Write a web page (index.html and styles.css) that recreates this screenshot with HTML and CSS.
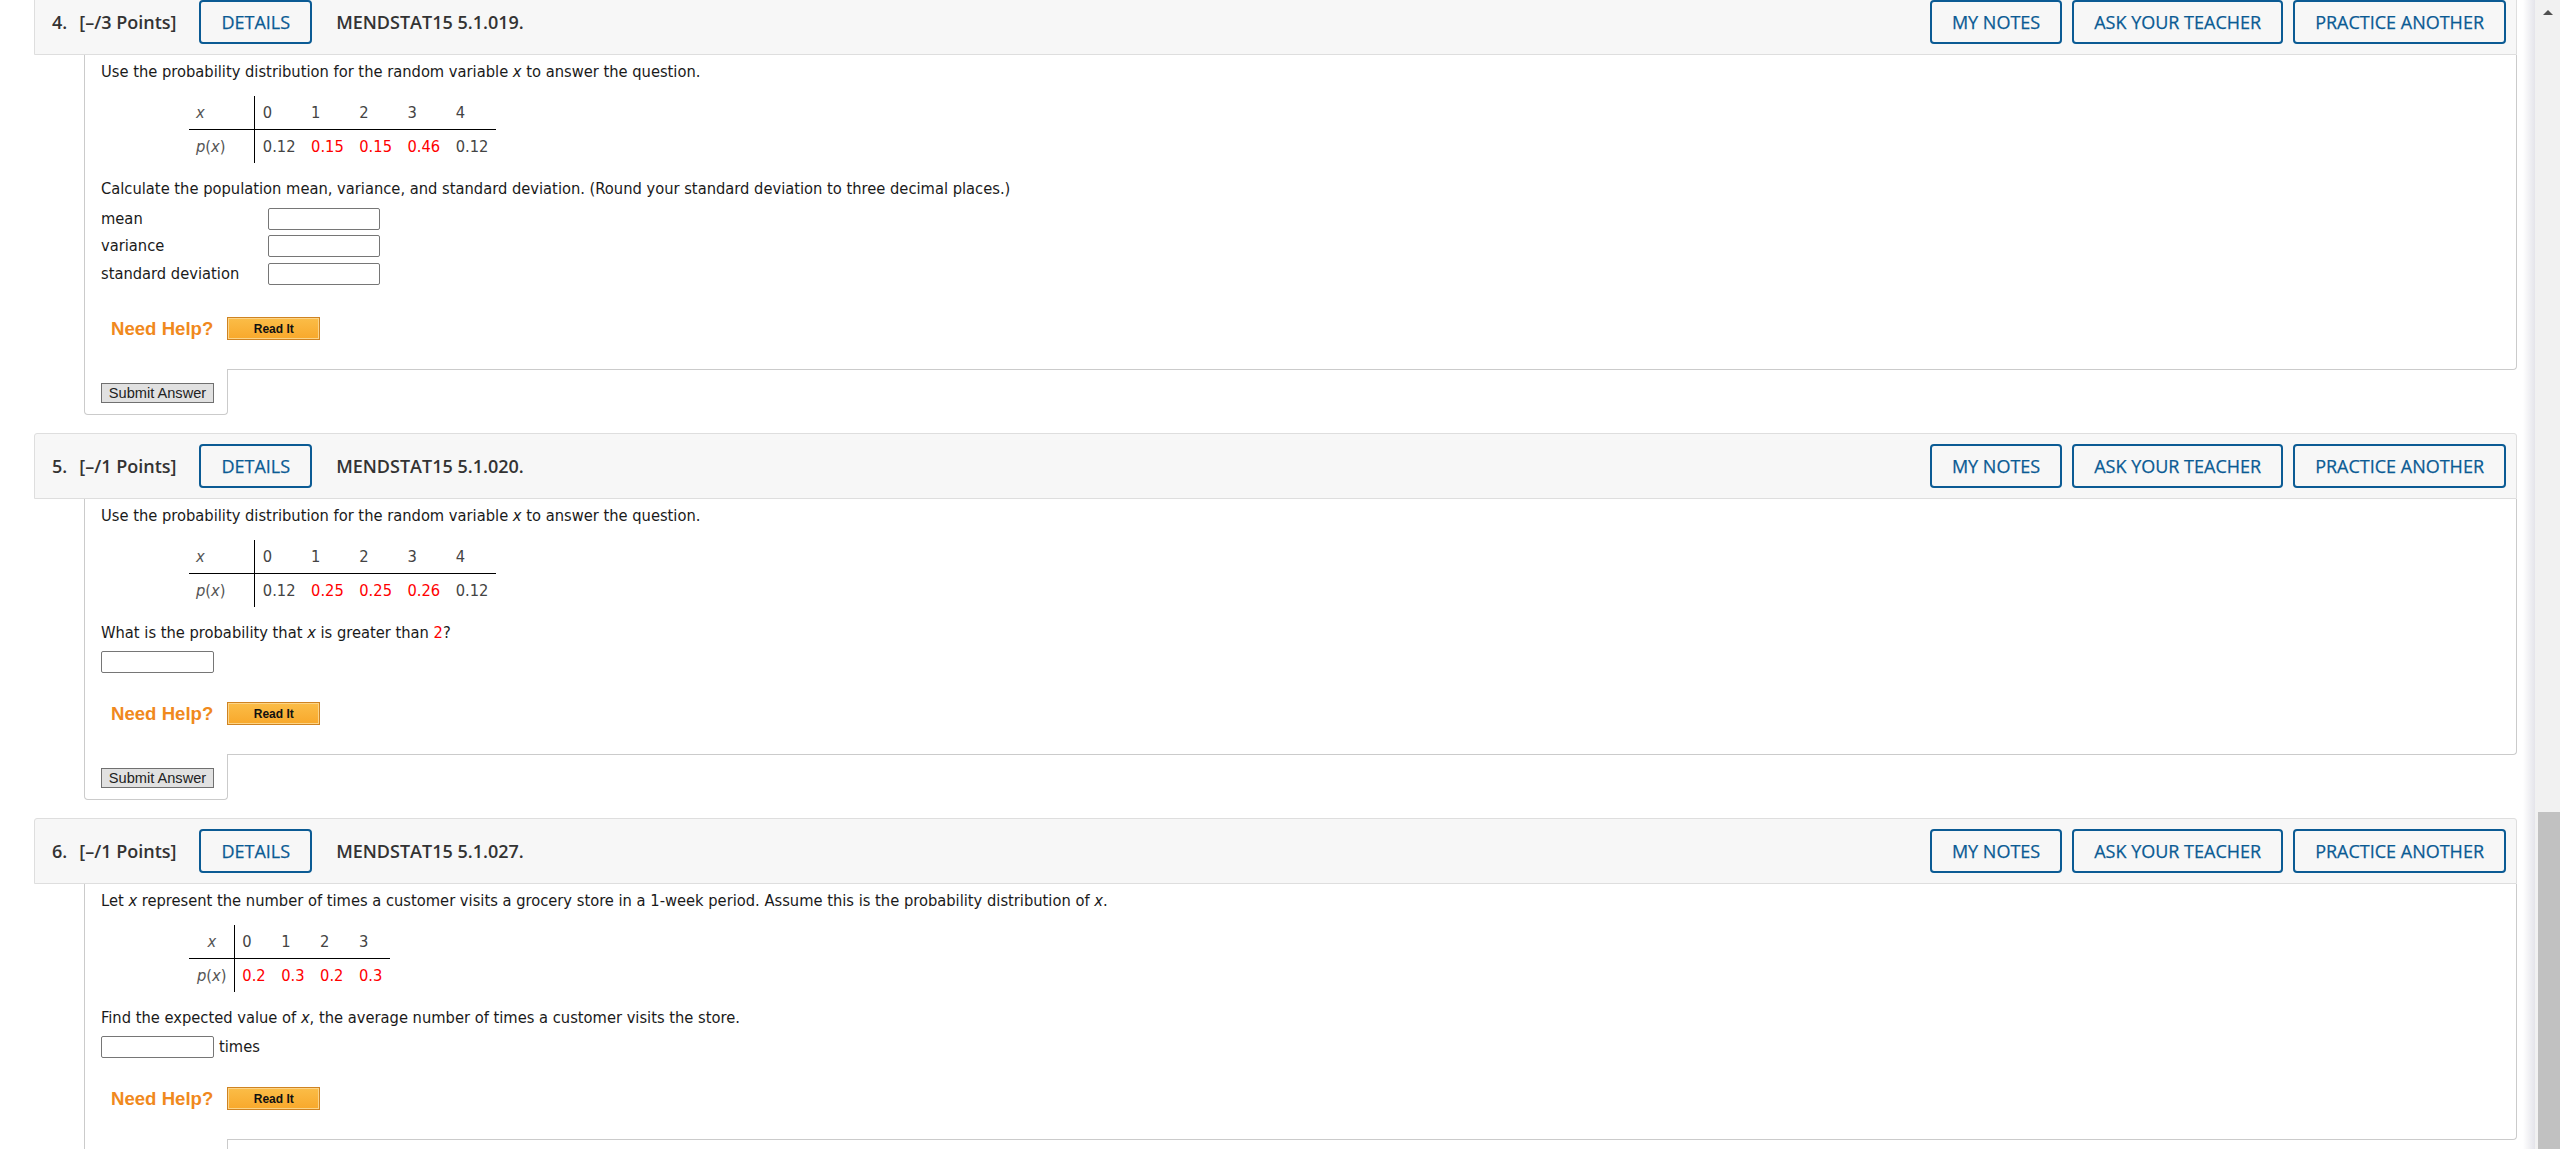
FILE: index.html
```html
<!DOCTYPE html>
<html lang="en">
<head>
<meta charset="utf-8">
<title>Assignment</title>
<link rel="stylesheet" href="styles.css">
</head>
<body>
<div class="window">
  <div class="main">

    <div class="q q-first">
      <div class="qhead">
        <span class="num">4.</span><span class="pts">[–/3 Points]</span>
        <span class="btn details">DETAILS</span>
        <span class="code">MENDSTAT15 5.1.019.</span>
        <div class="actions">
          <span class="btn">MY NOTES</span>
          <span class="btn">ASK YOUR TEACHER</span>
          <span class="btn">PRACTICE ANOTHER</span>
        </div>
      </div>
      <div class="qbody">
        <p>Use the probability distribution for the random variable <i>x</i> to answer the question.</p>
        <table class="dist">
          <tr><td class="lab"><i>x</i></td><td>0</td><td>1</td><td>2</td><td>3</td><td>4</td></tr>
          <tr><td class="lab"><i>p</i>(<i>x</i>)</td><td>0.12</td><td class="red">0.15</td><td class="red">0.15</td><td class="red">0.46</td><td>0.12</td></tr>
        </table>
        <p class="para">Calculate the population mean, variance, and standard deviation. (Round your standard deviation to three decimal places.)</p>
        <div class="inputs">
          <span>mean</span><input class="ans narrow" type="text">
          <span>variance</span><input class="ans narrow" type="text">
          <span>standard deviation</span><input class="ans narrow" type="text">
        </div>
        <div class="help help-after-grid">
          <span class="needhelp">Need Help?</span><span class="readit">Read It</span>
        </div>
      </div>
      <div class="tab"><button class="submit" type="button">Submit Answer</button></div>
    </div>

    <div class="q">
      <div class="qhead">
        <span class="num">5.</span><span class="pts">[–/1 Points]</span>
        <span class="btn details">DETAILS</span>
        <span class="code">MENDSTAT15 5.1.020.</span>
        <div class="actions">
          <span class="btn">MY NOTES</span>
          <span class="btn">ASK YOUR TEACHER</span>
          <span class="btn">PRACTICE ANOTHER</span>
        </div>
      </div>
      <div class="qbody">
        <p>Use the probability distribution for the random variable <i>x</i> to answer the question.</p>
        <table class="dist">
          <tr><td class="lab"><i>x</i></td><td>0</td><td>1</td><td>2</td><td>3</td><td>4</td></tr>
          <tr><td class="lab"><i>p</i>(<i>x</i>)</td><td>0.12</td><td class="red">0.25</td><td class="red">0.25</td><td class="red">0.26</td><td>0.12</td></tr>
        </table>
        <p class="para">What is the probability that <i>x</i> is greater than <span class="red">2</span>?</p>
        <div class="solo"><input class="ans" type="text"></div>
        <div class="help">
          <span class="needhelp">Need Help?</span><span class="readit">Read It</span>
        </div>
      </div>
      <div class="tab"><button class="submit" type="button">Submit Answer</button></div>
    </div>

    <div class="q">
      <div class="qhead">
        <span class="num">6.</span><span class="pts">[–/1 Points]</span>
        <span class="btn details">DETAILS</span>
        <span class="code">MENDSTAT15 5.1.027.</span>
        <div class="actions">
          <span class="btn">MY NOTES</span>
          <span class="btn">ASK YOUR TEACHER</span>
          <span class="btn">PRACTICE ANOTHER</span>
        </div>
      </div>
      <div class="qbody">
        <p>Let <i>x</i> represent the number of times a customer visits a grocery store in a 1-week period. Assume this is the probability distribution of <i>x</i>.</p>
        <table class="dist">
          <tr><td class="lab lab-c"><i>x</i></td><td>0</td><td>1</td><td>2</td><td>3</td></tr>
          <tr><td class="lab lab-c"><i>p</i>(<i>x</i>)</td><td class="red">0.2</td><td class="red">0.3</td><td class="red">0.2</td><td class="red">0.3</td></tr>
        </table>
        <p class="para">Find the expected value of <i>x</i>, the average number of times a customer visits the store.</p>
        <div class="solo inline"><input class="ans" type="text"><span>times</span></div>
        <div class="help">
          <span class="needhelp">Need Help?</span><span class="readit">Read It</span>
        </div>
      </div>
      <div class="tab"></div>
    </div>

  </div>
  <div class="shade"></div>
  <div class="sb">
    <div class="sb-arrow"><span class="tri"></span></div>
    <div class="sb-track"><div class="thumb"></div></div>
  </div>
</div>
</body>
</html>
```

FILE: styles.css
```css
html, body {
  margin: 0;
  padding: 0;
  background: #ffffff;
}
body {
  overflow: hidden;
}
.window {
  display: flex;
  height: 1149px;
  overflow: hidden;
}
.main {
  flex: 1;
  min-width: 0;
  padding: 0 6px 0 34px;
}
.shade {
  width: 12px;
  background: linear-gradient(to right, #ffffff, #e4e4ea);
}
.sb {
  width: 25px;
  background: #f1f1f1;
  display: flex;
  flex-direction: column;
}
.sb-arrow {
  height: 24px;
  display: flex;
  align-items: center;
  justify-content: center;
}
.tri {
  width: 0;
  height: 0;
  border-left: 5px solid transparent;
  border-right: 5px solid transparent;
  border-bottom: 5px solid #505050;
}
.sb-track {
  flex: 1;
  display: flex;
  flex-direction: column;
  justify-content: flex-end;
}
.thumb {
  height: 337px;
  margin-left: 3px;
  background: #c1c1c1;
}

/* question */
.q {
  margin-bottom: 18px;
}
.q-first {
  margin-top: -11px;
}
.qhead {
  box-sizing: border-box;
  height: 66px;
  display: flex;
  align-items: center;
  background: #f7f7f7;
  border: 1px solid #dedede;
  border-radius: 3px 3px 0 0;
  padding: 0 10px 0 17px;
  font-family: "Open Sans", "Noto Sans", sans-serif;
  font-size: 18px;
  color: #333333;
}
.num {
  font-weight: 600;
  margin-right: 12px;
}
.pts {
  font-weight: 600;
}
.code {
  font-weight: 600;
  margin-left: 24px;
}
.btn {
  box-sizing: border-box;
  height: 44px;
  padding: 0 20px;
  display: flex;
  align-items: center;
  border: 2px solid #0b5b94;
  border-radius: 4px;
  color: #0b5b94;
  font-weight: 500;
  -webkit-text-stroke: 0.25px #0b5b94;
  white-space: nowrap;
}
.details {
  margin-left: 23px;
}
.actions {
  margin-left: auto;
  display: flex;
  gap: 10px;
}

.qbody {
  margin-left: 50px;
  border: 1px solid #cbcbcb;
  border-top: 0;
  border-radius: 0 0 4px 0;
  padding: 7px 16px 29px;
  font-family: "DejaVu Sans", Verdana, sans-serif;
  font-stretch: semi-condensed;
  font-size: 16.35px;
  line-height: 20px;
  color: #1a1a1a;
}
.qbody p {
  margin: 0;
  white-space: nowrap;
}
.qbody .para {
  margin-top: 16px;
}
.red {
  color: #ff0000;
}

.dist {
  border-collapse: collapse;
  margin: 14px 0 0 88px;
}
.dist td {
  height: 33px;
  padding: 0 7.75px;
  color: #444444;
  white-space: nowrap;
  text-align: left;
}
.dist td.red {
  color: #ff0000;
}
.dist tr:first-child td {
  border-bottom: 1px solid #000000;
}
.dist td.lab {
  border-right: 1px solid #000000;
  color: #555555;
  padding: 0 28.5px 0 7px;
}
.dist td.lab-c {
  text-align: center;
  padding: 0 7px 0 8px;
}

.inputs {
  display: grid;
  grid-template-columns: 167px 112px;
  grid-auto-rows: 27.5px;
  align-items: center;
  margin-top: 6px;
}
.ans {
  box-sizing: border-box;
  display: block;
  width: 113px;
  height: 22px;
  margin: 0;
  padding: 0 3px;
  border: 1px solid #767676;
  border-radius: 2px;
  background: #ffffff;
}
.ans.narrow {
  width: 112px;
}
.solo {
  margin-top: 8px;
}
.inline {
  display: flex;
  align-items: center;
  gap: 5px;
}

.help {
  margin-top: 29px;
  height: 23px;
  display: flex;
  align-items: center;
  padding-left: 10px;
}
.help-after-grid {
  margin-top: 29.5px;
}
.needhelp {
  font-family: "Liberation Sans", Arial, sans-serif;
  font-weight: 700;
  font-size: 18.6px;
  color: #f0891d;
  margin-right: 14px;
}
.readit {
  box-sizing: border-box;
  width: 93px;
  height: 23px;
  display: flex;
  align-items: center;
  justify-content: center;
  border: 1px solid #cf8322;
  background: linear-gradient(#fbbd48, #f8a82b);
  box-shadow: inset 0 0 0 1px #fcd487;
  font-family: "Liberation Sans", Arial, sans-serif;
  font-weight: 700;
  font-size: 12px;
  color: #111111;
}

.tab {
  box-sizing: border-box;
  margin-left: 50px;
  margin-top: -1px;
  width: 144px;
  height: 46px;
  background: #ffffff;
  border: 1px solid #cbcbcb;
  border-top: 0;
  border-radius: 0 0 4px 4px;
  padding: 14px 0 0 16px;
}
.submit {
  box-sizing: border-box;
  display: block;
  width: 113px;
  height: 20px;
  margin: 0;
  padding: 0;
  background: #e1e1e1;
  border: 1px solid #707070;
  border-radius: 0;
  font-family: "Liberation Sans", Arial, sans-serif;
  font-size: 14.6px;
  line-height: 18px;
  color: #222222;
}
```
